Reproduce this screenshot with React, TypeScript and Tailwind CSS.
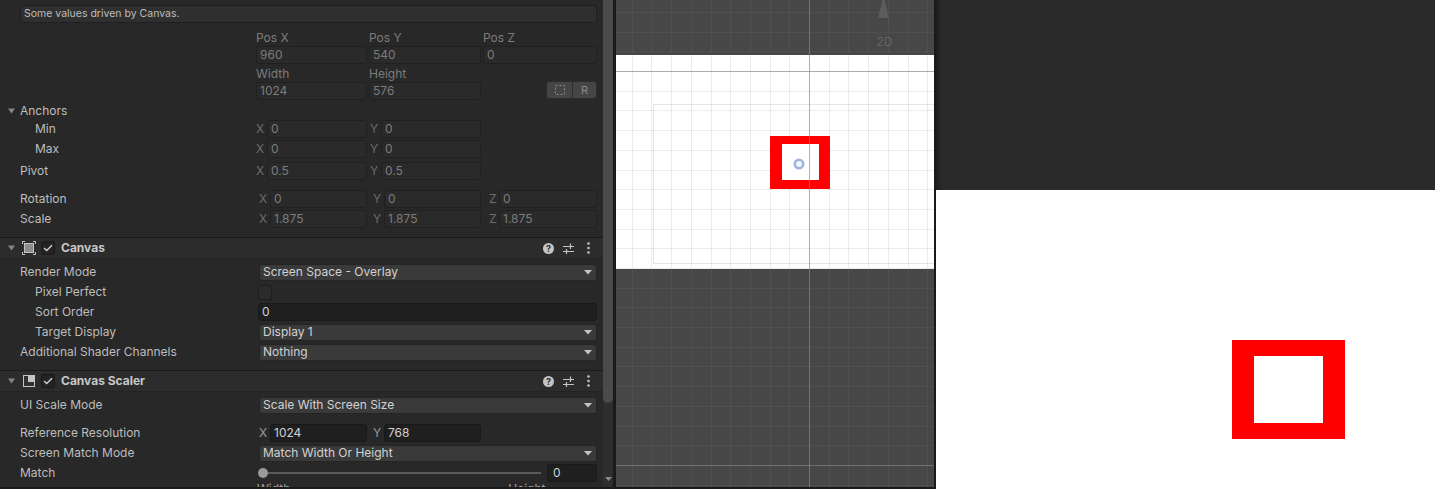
import React from "react";

const LABEL = "text-[12px] leading-none text-[#bdbdbd]";

function Fold() {
  return (
    <svg width="7" height="6" viewBox="0 0 7 6" className="shrink-0">
      <path d="M0 0.5h7L3.5 5.5z" fill="#858585" />
    </svg>
  );
}

function DropArrow() {
  return (
    <svg width="8" height="5" viewBox="0 0 8 5" className="shrink-0">
      <path d="M0 0h8L4 4.5z" fill="#c4c4c4" />
    </svg>
  );
}

function DimField({ value, className }: { value?: string; className: string }) {
  return (
    <div
      className={`flex h-[18px] items-center rounded-[3px] border border-[#202020] bg-[#2a2a2a] pl-[3px] text-[12px] leading-none text-[#7c7c7c] ${className}`}
    >
      {value}
    </div>
  );
}

function Axis({ name, className }: { name: string; className: string }) {
  return <span className={`text-[12px] leading-none text-[#6c6c6c] ${className}`}>{name}</span>;
}

function Row({
  label,
  indent,
  className,
  children,
}: {
  label: React.ReactNode;
  indent?: boolean;
  className: string;
  children?: React.ReactNode;
}) {
  return (
    <div className={`flex h-[18px] items-center ${className}`}>
      <div className={`flex w-[256px] shrink-0 items-center ${indent ? "pl-[35px]" : "pl-[20px]"} ${LABEL}`}>
        {label}
      </div>
      <div className="flex w-[341px] items-center">{children}</div>
    </div>
  );
}

function Dropdown({ value }: { value: string }) {
  return (
    <div className="ml-[3px] flex h-[17px] flex-1 items-center justify-between rounded-[3px] border border-[#242424] bg-[#3a3a3a] pl-[3px] pr-[4px] text-[12px] leading-none text-[#d2d2d2]">
      <span>{value}</span>
      <DropArrow />
    </div>
  );
}

function CanvasIcon() {
  return (
    <svg width="14" height="14" viewBox="0 0 14 14" className="shrink-0">
      <rect x="2.5" y="2.5" width="9" height="9" fill="#8c8c8c" stroke="#c4c4c4" />
      <path d="M0.5 3V0.5H3M11 0.5h2.5V3M13.5 11v2.5H11M3 13.5H0.5V11" fill="none" stroke="#c4c4c4" />
    </svg>
  );
}

function ScalerIcon() {
  return (
    <svg width="14" height="14" viewBox="0 0 14 14" className="shrink-0">
      <rect x="1.5" y="1.5" width="11" height="11" fill="#2f2f2f" stroke="#c4c4c4" />
      <rect x="6" y="2" width="6" height="6" fill="#c4c4c4" />
    </svg>
  );
}

function Check() {
  return (
    <div className="flex h-[14px] w-[14px] shrink-0 items-center justify-center rounded-[2px] border border-[#191919] bg-[#232323]">
      <svg width="10" height="8" viewBox="0 0 10 8">
        <path d="M1 4l2.7 2.6L9 1.2" fill="none" stroke="#d0d0d0" strokeWidth="1.4" />
      </svg>
    </div>
  );
}

function Header({ title, icon, className }: { title: string; icon: React.ReactNode; className: string }) {
  return (
    <div
      className={`flex h-[22px] items-center border-y border-t-[#1a1a1a] border-b-[#232323] bg-[#2c2c2c] pl-[8px] pr-[13px] ${className}`}
    >
      <Fold />
      <div className="ml-[7px]">{icon}</div>
      <div className="ml-[5px]">
        <Check />
      </div>
      <span className="ml-[6px] text-[12px] font-bold leading-none text-[#c8c8c8]">{title}</span>
      <div className="ml-auto flex items-center">
        <div className="flex h-[11px] w-[11px] items-center justify-center rounded-full bg-[#c4c4c4] text-[9px] font-bold leading-none text-[#2c2c2c]">
          ?
        </div>
        <svg width="11" height="11" viewBox="0 0 11 11" className="ml-[9px]">
          <path d="M0 3.5h11M7.5 0.5v5.5M0 8.5h11M3.5 6v5" stroke="#c4c4c4" strokeWidth="1.2" />
        </svg>
        <svg width="3" height="12" viewBox="0 0 3 12" className="ml-[13px]">
          <circle cx="1.5" cy="1.5" r="1.3" fill="#c4c4c4" />
          <circle cx="1.5" cy="6" r="1.3" fill="#c4c4c4" />
          <circle cx="1.5" cy="10.5" r="1.3" fill="#c4c4c4" />
        </svg>
      </div>
    </div>
  );
}

function Inspector() {
  return (
    <div className="h-[487px] w-[603px] shrink-0 overflow-hidden bg-[#282828]">
      <div className="ml-[20px] mt-[5px] flex h-[18px] w-[577px] items-center rounded-[3px] border border-[#1f1f1f] bg-[#2f2f2f] pl-[3px] text-[10.5px] leading-none text-[#bdbdbd]">
        Some values driven by Canvas.
      </div>

      <div className="mt-[8px] flex gap-[2px] pl-[256px]">
        <div className="flex w-[111px] flex-col">
          <div className="h-[14px] text-[12px] leading-[14px] text-[#7c7c7c]">Pos X</div>
          <DimField className="mt-[1px] w-full" value="960" />
          <div className="mt-[3px] h-[14px] text-[12px] leading-[14px] text-[#7c7c7c]">Width</div>
          <DimField className="mt-[1px] w-full" value="1024" />
        </div>
        <div className="flex w-[112px] flex-col">
          <div className="h-[14px] text-[12px] leading-[14px] text-[#7c7c7c]">Pos Y</div>
          <DimField className="mt-[1px] w-full" value="540" />
          <div className="mt-[3px] h-[14px] text-[12px] leading-[14px] text-[#7c7c7c]">Height</div>
          <DimField className="mt-[1px] w-full" value="576" />
        </div>
        <div className="flex w-[114px] flex-col">
          <div className="h-[14px] text-[12px] leading-[14px] text-[#7c7c7c]">Pos Z</div>
          <DimField className="mt-[1px] w-full" value="0" />
          <div className="mt-[3px] h-[14px]" />
          <div className="flex justify-end">
            <div className="flex h-[18px] w-[51px] overflow-hidden rounded-[3px] border border-[#2c2c2c]">
              <div className="flex w-[25px] items-center justify-center bg-[#454545]">
                <svg width="10" height="10" viewBox="0 0 10 10">
                  <rect x="0.5" y="0.5" width="9" height="9" fill="none" stroke="#8a8a8a" strokeDasharray="2 2" />
                </svg>
              </div>
              <div className="w-[1px] bg-[#2e2e2e]" />
              <div className="flex flex-1 items-center justify-center bg-[#454545] text-[11px] leading-none text-[#8a8a8a]">
                R
              </div>
            </div>
          </div>
        </div>
      </div>

      <div className="mt-[2px] flex h-[18px] items-center pl-[8px]">
        <Fold />
        <span className={`ml-[5px] ${LABEL}`}>Anchors</span>
      </div>
      <Row label="Min" indent className="mt-0">
        <Axis name="X" className="w-[11px]" />
        <DimField className="w-[100px]" value="0" />
        <Axis name="Y" className="ml-[3px] w-[11px]" />
        <DimField className="w-[100px]" value="0" />
      </Row>
      <Row label="Max" indent className="mt-[2px]">
        <Axis name="X" className="w-[11px]" />
        <DimField className="w-[100px]" value="0" />
        <Axis name="Y" className="ml-[3px] w-[11px]" />
        <DimField className="w-[100px]" value="0" />
      </Row>
      <Row label="Pivot" className="mt-[4px]">
        <Axis name="X" className="w-[11px]" />
        <DimField className="w-[100px]" value="0.5" />
        <Axis name="Y" className="ml-[3px] w-[11px]" />
        <DimField className="w-[100px]" value="0.5" />
      </Row>
      <Row label="Rotation" className="mt-[10px]">
        <Axis name="X" className="ml-[3px] w-[11px]" />
        <DimField className="w-[97px]" value="0" />
        <Axis name="Y" className="ml-[6px] w-[11px]" />
        <DimField className="w-[97px]" value="0" />
        <Axis name="Z" className="ml-[8px] w-[10px]" />
        <DimField className="w-[98px]" value="0" />
      </Row>
      <Row label="Scale" className="mt-[2px]">
        <Axis name="X" className="ml-[3px] w-[11px]" />
        <DimField className="w-[97px]" value="1.875" />
        <Axis name="Y" className="ml-[6px] w-[11px]" />
        <DimField className="w-[97px]" value="1.875" />
        <Axis name="Z" className="ml-[8px] w-[10px]" />
        <DimField className="w-[98px]" value="1.875" />
      </Row>

      <Header title="Canvas" icon={<CanvasIcon />} className="mt-[9px]" />
      <Row label="Render Mode" className="mt-[4px]">
        <Dropdown value="Screen Space - Overlay" />
      </Row>
      <Row label="Pixel Perfect" indent className="mt-[2px]">
        <div className="ml-[2px] h-[15px] w-[14px] rounded-[2px] border border-[#1c1c1c] bg-[#2b2b2b]" />
      </Row>
      <Row label="Sort Order" indent className="mt-[2px]">
        <div className="ml-[2px] flex h-[18px] flex-1 items-center rounded-[3px] border border-[#191919] bg-[#1f1f1f] pl-[3px] text-[12px] leading-none text-[#d2d2d2]">
          0
        </div>
      </Row>
      <Row label="Target Display" indent className="mt-[2px]">
        <Dropdown value="Display 1" />
      </Row>
      <Row label="Additional Shader Channels" className="mt-[2px]">
        <Dropdown value="Nothing" />
      </Row>

      <Header title="Canvas Scaler" icon={<ScalerIcon />} className="mt-[9px]" />
      <Row label="UI Scale Mode" className="mt-[4px]">
        <Dropdown value="Scale With Screen Size" />
      </Row>
      <Row label="Reference Resolution" className="mt-[10px]">
        <span className="ml-[3px] w-[11px] text-[12px] leading-none text-[#9a9a9a]">X</span>
        <div className="flex h-[18px] w-[97px] items-center rounded-[3px] border border-[#191919] bg-[#1f1f1f] pl-[3px] text-[12px] leading-none text-[#d2d2d2]">
          1024
        </div>
        <span className="ml-[6px] w-[11px] text-[12px] leading-none text-[#9a9a9a]">Y</span>
        <div className="flex h-[18px] w-[97px] items-center rounded-[3px] border border-[#191919] bg-[#1f1f1f] pl-[3px] text-[12px] leading-none text-[#d2d2d2]">
          768
        </div>
      </Row>
      <Row label="Screen Match Mode" className="mt-[2px]">
        <Dropdown value="Match Width Or Height" />
      </Row>
      <Row label="Match" className="mt-[2px]">
        <div className="ml-[2px] flex w-[283px] items-center">
          <div className="relative z-10 h-[10px] w-[10px] shrink-0 rounded-full bg-[#9a9a9a]" />
          <div className="-ml-[5px] h-[2px] flex-1 bg-[#5a5a5a]" />
        </div>
        <div className="ml-[6px] flex h-[18px] w-[50px] items-center rounded-[3px] border border-[#191919] bg-[#1f1f1f] pl-[5px] text-[12px] leading-none text-[#d2d2d2]">
          0
        </div>
      </Row>
      <div className="flex h-[14px] pl-[257px] text-[12px] leading-[14px] text-[#a0a0a0]">
        <span>Width</span>
        <span className="ml-[218px]">Height</span>
      </div>
    </div>
  );
}

function Scrollbar() {
  return (
    <div className="flex h-[487px] w-[10px] shrink-0 flex-col items-center bg-[#2e2e2e]">
      <div className="h-[403px] w-full rounded-b-[5px] bg-[#4a4a4a]" />
      <svg width="7" height="4" viewBox="0 0 7 4" className="mt-[74px]">
        <path d="M0 0h7L3.5 4z" fill="#8a8a8a" />
      </svg>
    </div>
  );
}

function SceneView() {
  const xs = Array.from({ length: 16 }, (_, i) => 15.7 + 19.7 * i);
  const ys = Array.from({ length: 25 }, (_, i) => 11.9 + 19.7 * i);
  return (
    <div className="h-[487px] w-[318px] shrink-0 bg-[#474747]">
      <svg width="318" height="487" viewBox="0 0 318 487" shapeRendering="crispEdges">
        <rect x="0" y="55" width="318" height="214" fill="#ffffff" />
        <rect x="37.5" y="104.5" width="300" height="159" fill="none" stroke="#e4e4e4" />
        {xs.map((x) => (
          <line key={`x${x}`} x1={Math.round(x) + 0.5} y1="0" x2={Math.round(x) + 0.5} y2="487" stroke="#808080" strokeOpacity="0.15" />
        ))}
        {ys.map((y) => (
          <line key={`y${y}`} x1="0" y1={Math.round(y) + 0.5} x2="318" y2={Math.round(y) + 0.5} stroke="#808080" strokeOpacity="0.15" />
        ))}
        <rect x="154" y="136" width="60" height="53" fill="#ff0000" />
        <rect x="166" y="144" width="37" height="36" fill="#ffffff" />
        <circle cx="183" cy="164" r="4.2" fill="#f4f7fc" stroke="#9cb6e2" strokeWidth="2.6" shapeRendering="auto" />
        <line x1="0" y1="71.5" x2="318" y2="71.5" stroke="#8a8a8a" strokeOpacity="0.65" />
        <line x1="0" y1="465.5" x2="318" y2="465.5" stroke="#8a8a8a" strokeOpacity="0.55" />
        <line x1="193.5" y1="0" x2="193.5" y2="487" stroke="#8a8a8a" strokeOpacity="0.65" />
        <path d="M262 18L267.5 -4L273 18z" fill="#5c5c5c" shapeRendering="auto" />
        <text x="268.5" y="46" textAnchor="middle" fontFamily="Inter, sans-serif" fontSize="12" fill="#646464">
          2D
        </text>
      </svg>
    </div>
  );
}

function GameView() {
  return (
    <div className="flex h-[489px] flex-1 flex-col">
      <div className="flex h-[190px] bg-[#2a2a2a]">
        <div className="w-[6px] bg-gradient-to-r from-[#1c1c1c] to-[#2a2a2a]" />
      </div>
      <div className="flex-1 bg-white pl-[296px] pt-[150px]">
        <div className="h-[99px] w-[113px] bg-[#ff0000] px-[22px] py-[16px]">
          <div className="h-full w-full bg-white" />
        </div>
      </div>
    </div>
  );
}

export default function App() {
  return (
    <div className="flex h-[489px] w-[1435px] overflow-hidden bg-[#1a1a1a] font-['Inter',sans-serif]">
      <div className="flex h-[489px] items-start border-b-2 border-[#1a1a1a]">
        <Inspector />
        <Scrollbar />
        <div className="h-[487px] w-[3px] bg-[#1a1a1a]" />
        <SceneView />
        <div className="h-[487px] w-[2px] bg-[#1a1a1a]" />
      </div>
      <GameView />
    </div>
  );
}
